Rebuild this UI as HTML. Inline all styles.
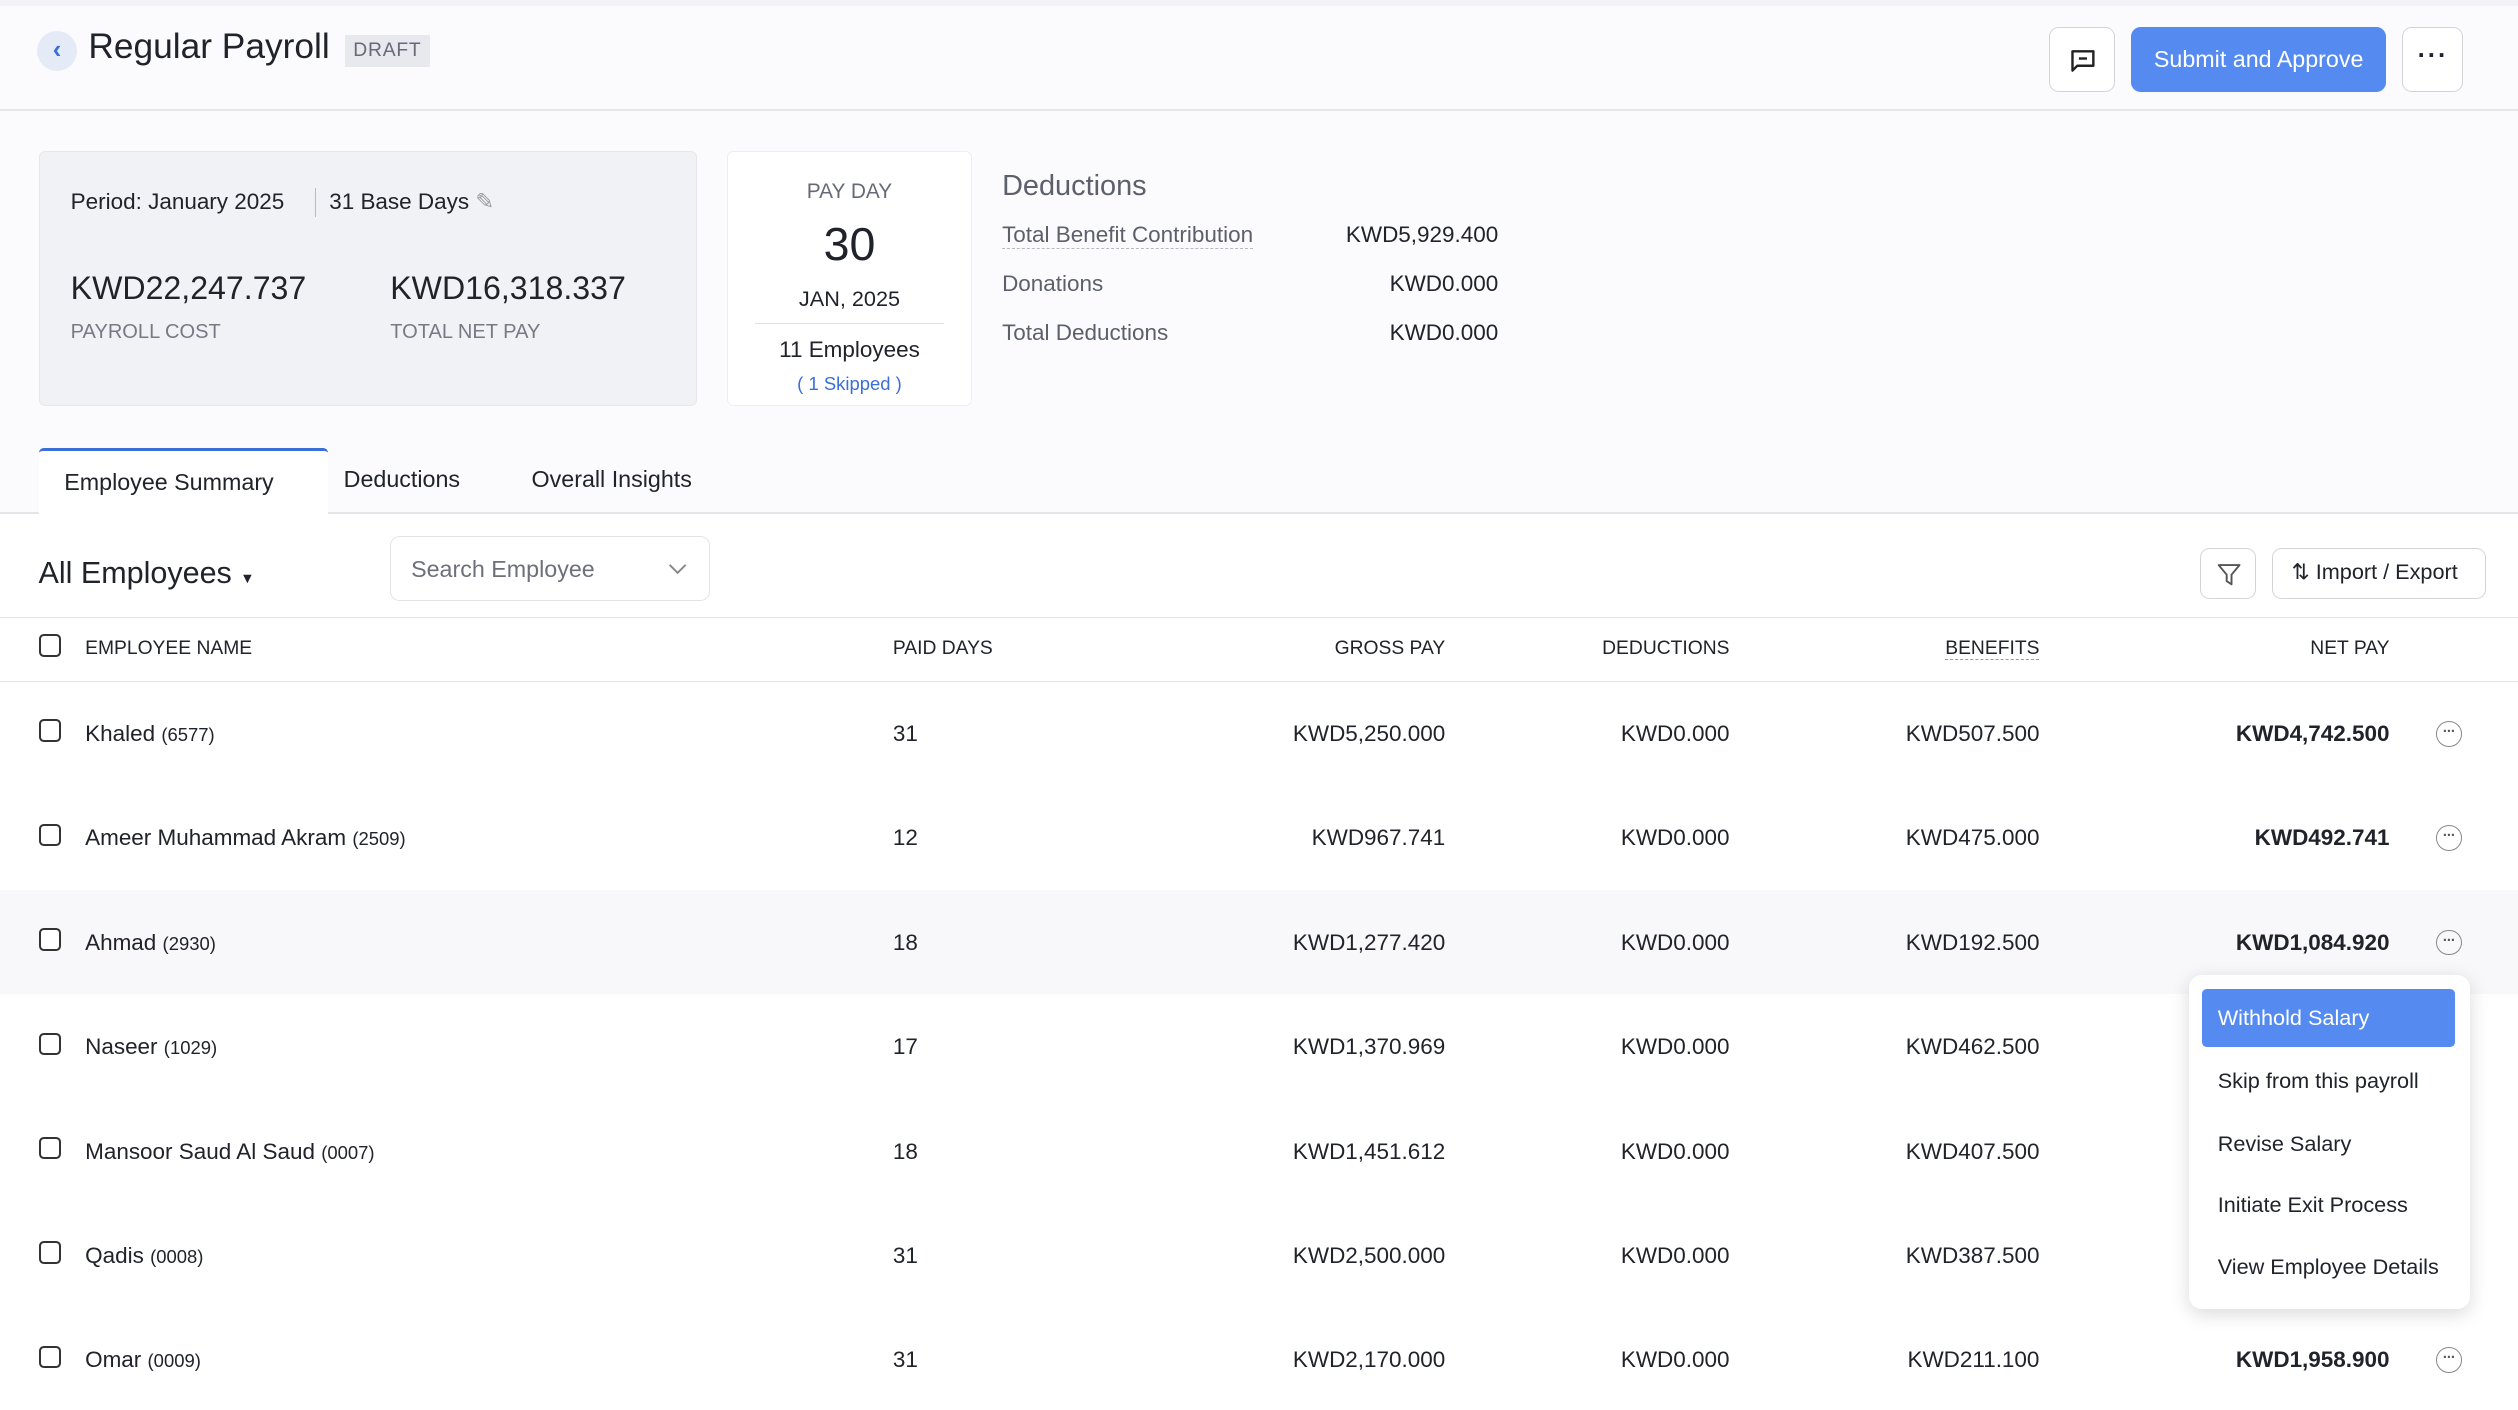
<!DOCTYPE html>
<html><head><meta charset="utf-8"><style>
*{box-sizing:border-box;margin:0;padding:0}
html,body{width:2518px;height:1410px;overflow:hidden;background:#fff}
#w{zoom:1.60587;width:1568px;height:878px;position:relative;font-family:"Liberation Sans",sans-serif;color:#21232b;background:#fbfbfe;overflow:hidden}
.a{position:absolute;white-space:nowrap}
.r{text-align:right}
.cb{position:absolute;width:14px;height:14px;border:1.3px solid #333;border-radius:3px;background:#fff}
.btn{position:absolute;border:1px solid #d4d4d8;border-radius:6px;background:#fff}
.more{position:absolute;width:16px;height:16px;border:1px solid #888;border-radius:50%;font-size:9px;line-height:13px;text-align:center;color:#555;font-weight:bold;letter-spacing:-0.5px}
</style></head><body><div id="w">
<div class="a" style="left:0;top:0;width:1568px;height:4px;background:#f3f3f7"></div>
<div class="a" style="left:0;top:68px;width:1568px;height:1px;background:#e6e6ea"></div>
<div class="a" style="left:23px;top:19px;width:25px;height:25px;border-radius:50%;background:#e5eaf7;color:#3a6fd8;font-size:16px;text-align:center;line-height:24px;font-weight:bold">&#8249;</div>
<div class="a" style="left:55px;top:17px;font-size:22px">Regular Payroll</div>
<div class="a" style="left:215px;top:22px;background:#e8e9ee;color:#666a75;font-size:12px;padding:3px 5px;letter-spacing:0.5px">DRAFT</div>
<div class="btn" style="left:1276px;top:17px;width:41px;height:40px"><svg width="41" height="40" viewBox="0 0 41 40"><path d="M14 14.5h13v9h-10l-3 3z" fill="none" stroke="#222" stroke-width="1.5" stroke-linejoin="round"/><path d="M18 19h5" stroke="#222" stroke-width="1.5"/></svg></div>
<div class="a" style="left:1327px;top:17px;width:159px;height:40px;background:#558bf0;border-radius:6px;color:#fff;font-size:14.5px;text-align:center;line-height:40px">Submit and Approve</div>
<div class="btn" style="left:1496px;top:17px;width:38px;height:40px;text-align:center;line-height:36px;font-size:16px;font-weight:bold;letter-spacing:1px">&middot;&middot;&middot;</div>

<div class="a" style="left:24px;top:94px;width:410px;height:159px;background:#f1f2f6;border:1px solid #e6e7eb;border-radius:4px"></div>
<div class="a" style="left:44px;top:118px;font-size:14px">Period: January 2025</div>
<div class="a" style="left:196px;top:117px;width:1px;height:18px;background:#bbb"></div>
<div class="a" style="left:205px;top:118px;font-size:14px">31 Base Days <span style="color:#999">&#9998;</span></div>
<div class="a" style="left:44px;top:168px;font-size:20px">KWD22,247.737</div>
<div class="a" style="left:243px;top:168px;font-size:20px">KWD16,318.337</div>
<div class="a" style="left:44px;top:200px;font-size:12.5px;color:#777a85">PAYROLL COST</div>
<div class="a" style="left:243px;top:200px;font-size:12.5px;color:#777a85">TOTAL NET PAY</div>

<div class="a" style="left:453px;top:94px;width:152px;height:159px;background:#fff;border:1px solid #eceef2;border-radius:4px"></div>
<div class="a" style="left:453px;top:112px;width:152px;text-align:center;font-size:13px;color:#666a75">PAY DAY</div>
<div class="a" style="left:453px;top:135px;width:152px;text-align:center;font-size:29px">30</div>
<div class="a" style="left:453px;top:178px;width:152px;text-align:center;font-size:13.5px">JAN, 2025</div>
<div class="a" style="left:470px;top:201px;width:118px;height:1px;background:#e3e3e6"></div>
<div class="a" style="left:453px;top:210px;width:152px;text-align:center;font-size:14px">11 Employees</div>
<div class="a" style="left:453px;top:232px;width:152px;text-align:center;font-size:11.5px;color:#3a6fd8">( 1 Skipped )</div>

<div class="a" style="left:624px;top:106px;font-size:18px;color:#5d606b">Deductions</div>
<div class="a" style="left:624px;top:138px;font-size:14px;color:#5d606b;border-bottom:1px dashed #b8b9c4">Total Benefit Contribution</div>
<div class="a" style="left:624px;top:169px;font-size:14px;color:#5d606b">Donations</div>
<div class="a" style="left:624px;top:199px;font-size:14px;color:#5d606b">Total Deductions</div>
<div class="a r" style="left:780px;width:153px;top:138px;font-size:14px">KWD5,929.400</div>
<div class="a r" style="left:780px;width:153px;top:169px;font-size:14px">KWD0.000</div>
<div class="a r" style="left:780px;width:153px;top:199px;font-size:14px">KWD0.000</div>

<div class="a" style="left:0;top:320px;width:1568px;height:558px;background:#fff"></div>
<div class="a" style="left:0;top:319px;width:1568px;height:1px;background:#e6e6ea"></div>
<div class="a" style="left:24px;top:279px;width:180px;height:42px;background:#fff;border-top:2px solid #3a6fd8;border-radius:3px 3px 0 0"></div>
<div class="a" style="left:40px;top:292px;font-size:14.5px">Employee Summary</div>
<div class="a" style="left:214px;top:290px;font-size:14.5px">Deductions</div>
<div class="a" style="left:331px;top:290px;font-size:14.5px">Overall Insights</div>

<div class="a" style="left:24px;top:346px;font-size:19px">All Employees <span style="font-size:9px">&#9660;</span></div>
<div class="btn" style="left:243px;top:334px;width:199px;height:40px;border-color:#e3e3e7"></div>
<div class="a" style="left:256px;top:346px;font-size:14.5px;color:#6d707a">Search Employee</div>
<svg class="a" style="left:416px;top:349px" width="12" height="10"><path d="M1 3l5 5 5-5" fill="none" stroke="#888" stroke-width="1.2"/></svg>
<div class="btn" style="left:1370px;top:341px;width:35px;height:32px"><svg width="35" height="32"><path d="M11 10h13l-5 6v6l-3-2v-4z" fill="none" stroke="#555" stroke-width="1.2" stroke-linejoin="round"/></svg></div>
<div class="btn" style="left:1415px;top:341px;width:133px;height:32px"></div>
<div class="a" style="left:1427px;top:348px;font-size:13.5px">&#8645; Import / Export</div>
<div class="a" style="left:0;top:384px;width:1568px;height:1px;background:#e3e3e6"></div>
<div class="a" style="left:0;top:424px;width:1568px;height:1px;background:#e3e3e6"></div>
<div class="cb" style="left:24px;top:395px"></div>
<div class="a" style="left:53px;top:397px;font-size:12px">EMPLOYEE NAME</div>
<div class="a" style="left:556px;top:397px;font-size:12px">PAID DAYS</div>
<div class="a r" style="left:700px;width:200px;top:397px;font-size:12px">GROSS PAY</div>
<div class="a r" style="left:877px;width:200px;top:397px;font-size:12px">DEDUCTIONS</div>
<div class="a r" style="left:1070px;width:200px;top:397px;font-size:12px;"><span style="border-bottom:1px dashed #999">BENEFITS</span></div>
<div class="a r" style="left:1288px;width:200px;top:397px;font-size:12px">NET PAY</div>

<div class="a" style="left:0;top:554px;width:1568px;height:65px;background:#f8f8fa"></div>
<div id="rows"></div>

<div class="a" style="left:1363px;top:607px;width:175px;height:208px;background:#fff;border-radius:8px;box-shadow:0 3px 12px rgba(0,0,0,0.15)"></div>
<div class="a" style="left:1371px;top:616px;width:158px;height:36px;background:#558bf0;border-radius:3px"></div>
<div class="a" style="left:1381px;top:626px;font-size:13.5px;color:#fff">Withhold Salary</div>
<div class="a" style="left:1381px;top:665px;font-size:13.5px">Skip from this payroll</div>
<div class="a" style="left:1381px;top:704px;font-size:13.5px">Revise Salary</div>
<div class="a" style="left:1381px;top:742px;font-size:13.5px">Initiate Exit Process</div>
<div class="a" style="left:1381px;top:781px;font-size:13.5px">View Employee Details</div>
</div>
<script>
var d=[["Khaled","6577","31","KWD5,250.000","KWD507.500","KWD4,742.500"],["Ameer Muhammad Akram","2509","12","KWD967.741","KWD475.000","KWD492.741"],["Ahmad","2930","18","KWD1,277.420","KWD192.500","KWD1,084.920"],["Naseer","1029","17","KWD1,370.969","KWD462.500",""],["Mansoor Saud Al Saud","0007","18","KWD1,451.612","KWD407.500",""],["Qadis","0008","31","KWD2,500.000","KWD387.500",""],["Omar","0009","31","KWD2,170.000","KWD211.100","KWD1,958.900"]];
var h="";d.forEach(function(r,i){var y=449+i*65;
h+='<div class="cb" style="left:24px;top:'+(y-1)+'px"></div><div class="a" style="left:53px;top:'+y+'px;font-size:14px">'+r[0]+' <span style="font-size:11.5px">('+r[1]+')</span></div><div class="a" style="left:556px;top:'+y+'px;font-size:14px">'+r[2]+'</div><div class="a r" style="left:700px;width:200px;top:'+y+'px;font-size:14px">'+r[3]+'</div><div class="a r" style="left:877px;width:200px;top:'+y+'px;font-size:14px">KWD0.000</div><div class="a r" style="left:1070px;width:200px;top:'+y+'px;font-size:14px">'+r[4]+'</div>';
if(r[5])h+='<div class="a r" style="left:1288px;width:200px;top:'+y+'px;font-size:14px;font-weight:600">'+r[5]+'</div><div class="more" style="left:1517px;top:'+(y+0)+'px">&middot;&middot;&middot;</div>';});
document.getElementById("rows").outerHTML=h;
</script>
</body></html>
